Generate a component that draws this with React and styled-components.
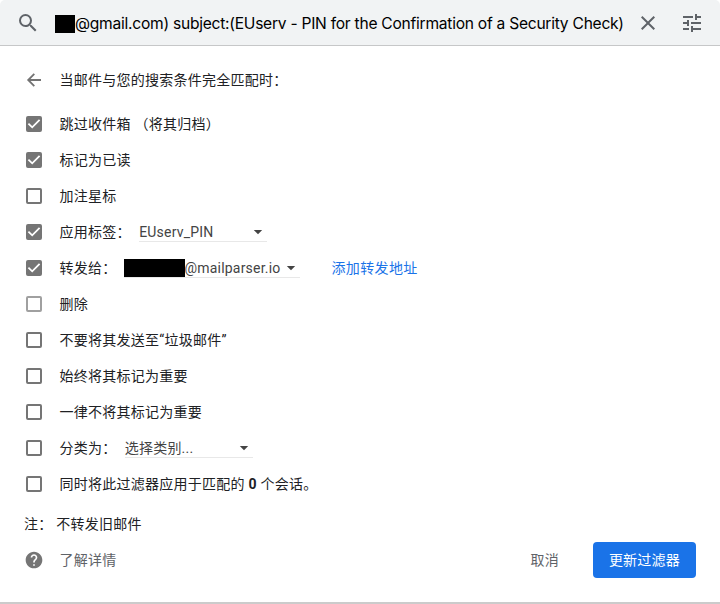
import React from "react";
import styled, { createGlobalStyle } from "styled-components";
import { MdSearch, MdClose, MdTune, MdHelp } from "react-icons/md";

const GlobalStyle = createGlobalStyle`
  * { box-sizing: border-box; }
  body { margin: 0; background: #fff; }
`;

const Panel = styled.main`
  display: flex;
  flex-direction: column;
  width: 720px;
  height: 604px;
  background: #fff;
  border-bottom: 2px solid #cbcbcb;
  color: #202124;
  font: 14px/20px Roboto, "Noto Sans CJK SC", sans-serif;
  letter-spacing: 0.25px;
  white-space: pre;
`;

const SearchBar = styled.header`
  display: flex;
  align-items: center;
  flex: none;
  height: 46px;
  padding: 0 16px;
  background: #f1f3f4;
  border-bottom: 1px solid #c6c7c8;
  border-radius: 5px 5px 0 0;
  color: #5f6368;
  svg { flex: none; display: block; }
`;

const Query = styled.div`
  display: flex;
  align-items: center;
  width: 569px;
  margin: 2px 12px 0 15px;
  color: #000;
  font: 15.6px/18px Inter, sans-serif;
  letter-spacing: -0.26px;
`;

const TuneIcon = styled(MdTune)`
  margin-left: 20px;
`;

const Redaction = styled.span`
  flex: none;
  width: ${(p) => p.$width}px;
  height: 18px;
  background: #000;
`;

const Body = styled.section`
  display: flex;
  flex-direction: column;
  padding: 14px 24px 0;
`;

const Row = styled.div`
  display: flex;
  align-items: center;
  height: 36px;
`;

const TitleRow = styled(Row)`
  height: 40px;
  margin-bottom: 6px;
  svg { color: #737373; }
`;

const Slot = styled.span`
  display: flex;
  flex: none;
  width: 36px;
  padding-left: ${(p) => p.$inset || 0}px;
`;

const Label = styled.span`
  margin-left: -0.5px;
`;

const Box = styled.span`
  display: block;
  width: 16px;
  height: 16px;
  border: 2px solid ${(p) => (p.$muted ? "#a0a0a0" : "#757575")};
  border-radius: 2px;
  background: ${(p) => (p.$on ? "#757575" : "#fff")};
  svg { display: block; margin: -2px; }
`;

const Select = styled.span`
  display: flex;
  align-items: center;
  width: ${(p) => p.$width}px;
  height: 20px;
  margin: 0 0 0 ${(p) => p.$gap}px;
  padding-right: 4px;
  border-bottom: 1px solid #e8e8e8;
  color: #444;
  letter-spacing: 0.2px;
  svg { margin-left: auto; flex: none; }
`;

const Link = styled.a`
  margin-left: 32px;
  color: #1a73e8;
  letter-spacing: 0.35px;
`;

const Note = styled(Row)`
  margin-top: 4px;
`;

const Footer = styled(Row)`
  color: #5f6368;
  svg { color: #757575; }
`;

const Cancel = styled.button`
  margin: 0 34px 0 auto;
  padding: 0;
  border: 0;
  background: none;
  color: #5f6368;
  font: inherit;
  letter-spacing: inherit;
`;

const Submit = styled.button`
  width: 103px;
  height: 36px;
  padding: 0;
  border: 0;
  border-radius: 4px;
  background: #1a73e8;
  color: #fff;
  font: inherit;
  letter-spacing: 0.25px;
`;

function BackArrow() {
  return (
    <svg width="20" height="20" viewBox="0 0 20 20" fill="none" stroke="currentColor" strokeWidth="1.8">
      <path d="M17 10H4.5M10.3 3.8 4.2 10l6.1 6.2" />
    </svg>
  );
}

function Caret() {
  return (
    <svg width="10" height="6" viewBox="0 0 10 6" fill="currentColor">
      <path d="M0.8 1h8.4L5 5.2z" />
    </svg>
  );
}

function Option({ on, muted, label, children }) {
  return (
    <Row>
      <Slot $inset={2}>
        <Box $on={on} $muted={muted}>
          {on && (
            <svg width="16" height="16" viewBox="0 0 16 16" fill="none" stroke="#fff" strokeWidth="1.8">
              <path d="M2.4 7.7 6.2 11.3 13.6 3.9" />
            </svg>
          )}
        </Box>
      </Slot>
      <Label>{label}</Label>
      {children}
    </Row>
  );
}

export default function App() {
  return (
    <>
      <GlobalStyle />
      <Panel>
        <SearchBar>
          <MdSearch size={24} />
          <Query>
            <Redaction $width={20} />
            <span>@gmail.com) subject:(EUserv - PIN for the Confirmation of a Security Check)</span>
          </Query>
          <MdClose size={24} />
          <TuneIcon size={24} />
        </SearchBar>
        <Body>
          <TitleRow>
            <Slot><BackArrow /></Slot>
            <Label>当邮件与您的搜索条件完全匹配时：</Label>
          </TitleRow>
          <Option on label="跳过收件箱 （将其归档）" />
          <Option on label="标记为已读" />
          <Option label="加注星标" />
          <Option on label="应用标签：">
            <Select $width={128} $gap={8.4}>
              <span>EUserv_PIN</span>
              <Caret />
            </Select>
          </Option>
          <Option on label="转发给：">
            <Select $width={176} $gap={7}>
              <Redaction $width={61} />
              <span>@mailparser.io</span>
              <Caret />
            </Select>
            <Link>添加转发地址</Link>
          </Option>
          <Option muted label="删除" />
          <Option label="不要将其发送至“垃圾邮件”" />
          <Option label="始终将其标记为重要" />
          <Option label="一律不将其标记为重要" />
          <Option label="分类为：">
            <Select $width={128} $gap={8.3}>
              <span>选择类别...</span>
              <Caret />
            </Select>
          </Option>
          <Option label={<>同时将此过滤器应用于匹配的 <b>0</b> 个会话。</>} />
          <Note>注： 不转发旧邮件</Note>
          <Footer>
            <Slot><MdHelp size={20} /></Slot>
            <Label>了解详情</Label>
            <Cancel>取消</Cancel>
            <Submit>更新过滤器</Submit>
          </Footer>
        </Body>
      </Panel>
    </>
  );
}
